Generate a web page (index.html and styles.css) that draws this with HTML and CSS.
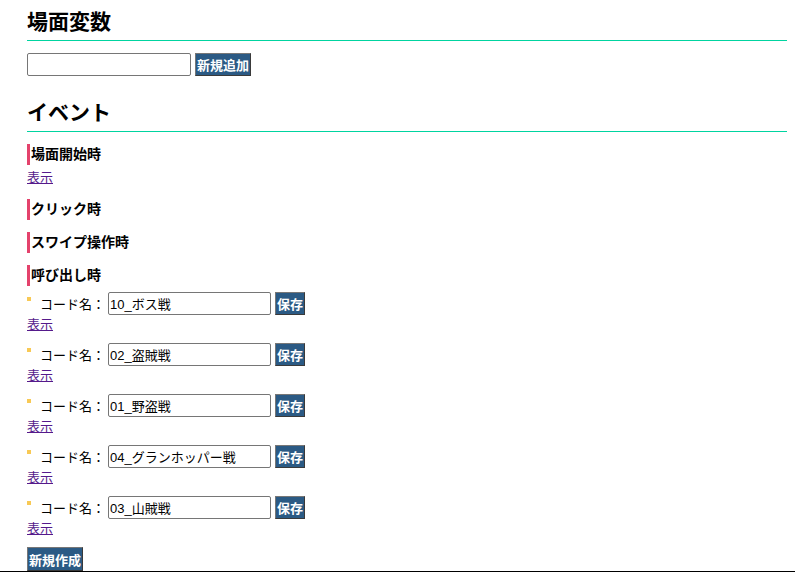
FILE: index.html
```html
<!DOCTYPE html>
<html lang="ja">
<head>
  <meta charset="UTF-8" />
  <title>場面編集</title>
  <link rel="stylesheet" href="styles.css">
</head>
<body>

  <div class="page">

    <!-- 場面変数 -->
    <h2 class="section-title">場面変数</h2>
    <div class="add-row">
      <input type="text" class="text-input var-input">
      <button class="btn">新規追加</button>
    </div>

    <!-- イベント -->
    <h2 class="section-title event-title">イベント</h2>

    <h3 class="event-name">場面開始時</h3>
    <a href="#" class="show-link">表示</a>

    <h3 class="event-name">クリック時</h3>

    <h3 class="event-name">スワイプ操作時</h3>

    <h3 class="event-name">呼び出し時</h3>
    <ul class="code-list">
      <li>
        <div class="code-row">
          <span class="code-label">コード名：</span>
          <input type="text" class="text-input code-input" value="10_ボス戦">
          <button class="btn">保存</button>
        </div>
        <a href="#" class="show-link">表示</a>
      </li>
      <li>
        <div class="code-row">
          <span class="code-label">コード名：</span>
          <input type="text" class="text-input code-input" value="02_盗賊戦">
          <button class="btn">保存</button>
        </div>
        <a href="#" class="show-link">表示</a>
      </li>
      <li>
        <div class="code-row">
          <span class="code-label">コード名：</span>
          <input type="text" class="text-input code-input" value="01_野盗戦">
          <button class="btn">保存</button>
        </div>
        <a href="#" class="show-link">表示</a>
      </li>
      <li>
        <div class="code-row">
          <span class="code-label">コード名：</span>
          <input type="text" class="text-input code-input" value="04_グランホッパー戦">
          <button class="btn">保存</button>
        </div>
        <a href="#" class="show-link">表示</a>
      </li>
      <li>
        <div class="code-row">
          <span class="code-label">コード名：</span>
          <input type="text" class="text-input code-input" value="03_山賊戦">
          <button class="btn">保存</button>
        </div>
        <a href="#" class="show-link">表示</a>
      </li>
    </ul>

    <button class="btn new-btn">新規作成</button>
  </div>

  <div class="footer"></div>

</body>
</html>
```

FILE: styles.css
```css
* { box-sizing: border-box; }
body {
  margin: 0;
  font-family: "Liberation Sans", "Noto Sans CJK JP", sans-serif;
  font-size: 13px;
  color: #000;
  background: #fff;
}

.page {
  padding: 0 8px 0 27px;
}

.section-title {
  margin: 8px 0 0;
  font-size: 21px;
  line-height: 28px;
  padding-bottom: 4px;
  border-bottom: 1px solid #00d4a0;
}

.event-title {
  margin-top: 23px;
}

.add-row {
  display: flex;
  align-items: center;
  gap: 4px;
  margin-top: 12px;
}

.text-input {
  height: 23px;
  border: 1px solid #767676;
  border-radius: 2px;
  padding: 0 1px;
  font-family: inherit;
  font-size: 13px;
  color: #000;
}

.var-input { width: 164px; }
.code-input { width: 163px; }

.btn {
  height: 23px;
  padding: 0 1px;
  background: #2b5a84;
  color: #fff;
  font-family: inherit;
  font-size: 13px;
  font-weight: bold;
  border: 1px solid #3a3a3a;
  border-top-color: #777;
  border-left-color: #777;
  cursor: pointer;
}

.event-name {
  margin: 12px 0 0;
  padding-left: 1px;
  font-size: 14px;
  line-height: 21px;
  border-left: 3px solid #e4426c;
}

.show-link {
  display: block;
  width: max-content;
  margin-top: 4px;
  line-height: 18px;
  color: #551a8b;
}

.code-list {
  list-style: none;
  margin: 6px 0 0;
  padding: 0;
}

.code-list li {
  margin-bottom: 9px;
}

.code-list .show-link {
  margin-top: 0;
  line-height: 19px;
}

.code-row {
  display: flex;
  align-items: center;
  gap: 4px;
}

.code-label {
  position: relative;
  flex-shrink: 0;
  white-space: nowrap;
  padding-left: 13px;
  width: 77px;
}

.code-label::before {
  content: "";
  position: absolute;
  left: 0;
  top: 3px;
  width: 4px;
  height: 4px;
  background: #f8c955;
}

.new-btn {
  display: block;
  height: 24px;
  margin-top: 1px;
  padding: 0 1px;
}

.footer {
  border-top: 1px solid #000;
}
```
